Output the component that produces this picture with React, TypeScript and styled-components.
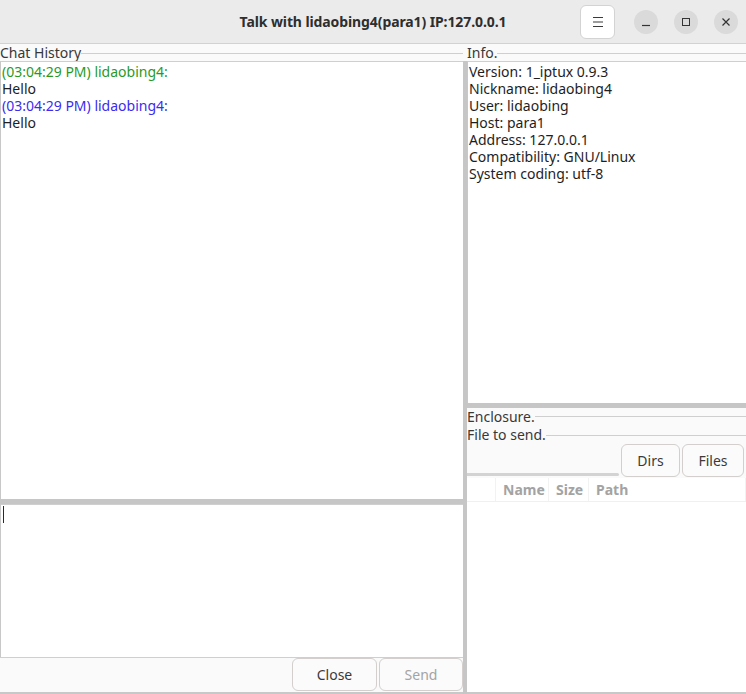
import React from "react";
import styled, { createGlobalStyle } from "styled-components";

const Global = createGlobalStyle`
  html, body { margin: 0; padding: 0; }
  body {
    width: 746px;
    height: 694px;
    overflow: hidden;
    background: #fafafa;
    font-family: "Noto Sans", "Open Sans", sans-serif;
    font-size: 14px;
    color: #2b2b2b;
  }
`;

const Window = styled.div`
  display: flex;
  flex-direction: column;
  width: 746px;
  height: 694px;
`;

const TitleBar = styled.header`
  position: relative;
  height: 43px;
  flex: none;
  display: flex;
  align-items: center;
  justify-content: flex-end;
  gap: 16px;
  padding-right: 8px;
  background: #ebebeb;
  border-bottom: 1px solid #d2d2d2;
`;

const Title = styled.h1`
  position: absolute;
  left: 0;
  right: 0;
  top: 0;
  bottom: 0;
  margin: 0;
  display: flex;
  align-items: center;
  justify-content: center;
  font-size: 14px;
  font-weight: 700;
  letter-spacing: -0.1px;
  color: #2e2e2e;
  pointer-events: none;
`;

const MenuButton = styled.button`
  width: 35px;
  height: 34px;
  margin-right: 3px;
  border: 1px solid #d3d3d3;
  border-radius: 6px;
  background: #ffffff;
  display: flex;
  align-items: center;
  justify-content: center;
  padding: 0;
  z-index: 1;
`;

const WinButtons = styled.div`
  display: flex;
  gap: 16px;
  z-index: 1;
`;

const CircleButton = styled.button`
  width: 24px;
  height: 24px;
  border-radius: 50%;
  border: none;
  background: #dadada;
  display: flex;
  align-items: center;
  justify-content: center;
  padding: 0;
`;

const Main = styled.div`
  flex: 1;
  display: flex;
  min-height: 0;
`;

const Column = styled.div<{ $width?: number }>`
  display: flex;
  flex-direction: column;
  ${(p) => (p.$width ? `width: ${p.$width}px; flex: none;` : "flex: 1; min-width: 0;")}
`;

const FrameLabel = styled.div<{ $height?: number }>`
  display: flex;
  align-items: center;
  height: ${(p) => p.$height ?? 17}px;
  flex: none;
  line-height: 17px;
  color: #383838;
  white-space: nowrap;
  &::after {
    content: "";
    flex: 1;
    height: 1px;
    margin-top: 1px;
    background: #cfcfcf;
  }
`;

const TextView = styled.div<{ $grow?: boolean; $height?: number }>`
  ${(p) => (p.$grow ? "flex: 1;" : `height: ${p.$height}px; flex: none;`)}
  min-height: 0;
  background: #ffffff;
  border-top: 1px solid #cfcfcf;
  border-left: 1px solid #c8c8c8;
  padding: 1px 0 0 1px;
  line-height: 17px;
  box-sizing: border-box;
  overflow: hidden;
`;

const Line = styled.div<{ $color?: string }>`
  color: ${(p) => p.$color ?? "#1e1e1e"};
  white-space: nowrap;
`;

const Cursor = styled.span`
  display: block;
  width: 1px;
  height: 17px;
  margin-left: 1px;
  background: #2a2a2a;
`;

const HandleH = styled.div`
  height: 5px;
  flex: none;
  background: #c6c6c6;
`;

const HandleV = styled.div`
  width: 4px;
  flex: none;
  margin-top: 17px;
  background: #c6c6c6;
`;

const ButtonBar = styled.div`
  height: 37px;
  flex: none;
  display: flex;
  justify-content: flex-end;
  align-items: flex-start;
  gap: 2px;
  border-top: 1px solid #cfcfcf;
  border-bottom: 2px solid #c8c8c8;
  box-sizing: border-box;
`;

const Button = styled.button<{ $width: number; $disabled?: boolean }>`
  width: ${(p) => p.$width}px;
  height: 33px;
  border: 1px solid #d2cfcc;
  border-radius: 6px;
  background: #fbfbfb;
  font-family: inherit;
  font-size: 14px;
  color: ${(p) => (p.$disabled ? "#a4a4a4" : "#3a3a3a")};
  padding: 0;
`;

const Spacer = styled.div`
  height: 2px;
  flex: none;
`;

const FileBar = styled.div`
  height: 35px;
  flex: none;
  display: flex;
  align-items: flex-end;
  gap: 2px;
  padding: 0 2px 1px 0;
  box-sizing: border-box;
`;

const Groove = styled.div`
  flex: 1;
  height: 3px;
  margin-bottom: 1px;
  border-radius: 0 2px 2px 0;
  background: #d3d3d3;
`;

const TreeView = styled.div`
  flex: 1;
  background: #ffffff;
  border-bottom: 2px solid #c8c8c8;
  display: flex;
  flex-direction: column;
`;

const TreeHeader = styled.div`
  height: 24px;
  display: flex;
  border-bottom: 1px solid #f0f0f0;
  box-sizing: border-box;
`;

const HeaderCell = styled.div<{ $width?: number }>`
  ${(p) => (p.$width ? `width: ${p.$width}px; flex: none;` : "flex: 1;")}
  display: flex;
  align-items: center;
  padding-left: 7px;
  box-sizing: border-box;
  border-right: 1px solid #f2f2f2;
  font-weight: 700;
  color: #a3a3a3;
`;

const Icon = styled.svg`
  display: block;
`;

export default function App() {
  return (
    <>
      <Global />
      <Window>
        <TitleBar>
          <Title>Talk with lidaobing4(para1) IP:127.0.0.1</Title>
          <MenuButton aria-label="Menu">
            <Icon width="12" height="12" viewBox="0 0 12 12">
              <path d="M1 1.5h10M1 6h10M1 10.5h10" stroke="#3a3a3a" strokeWidth="1" />
            </Icon>
          </MenuButton>
          <WinButtons>
            <CircleButton aria-label="Minimize">
              <Icon width="10" height="10" viewBox="0 0 10 10">
                <path d="M1 8.5h8" stroke="#333" strokeWidth="1.2" />
              </Icon>
            </CircleButton>
            <CircleButton aria-label="Maximize">
              <Icon width="10" height="10" viewBox="0 0 10 10">
                <rect x="1.5" y="1.5" width="7" height="7" fill="none" stroke="#333" strokeWidth="1" />
              </Icon>
            </CircleButton>
            <CircleButton aria-label="Close">
              <Icon width="10" height="10" viewBox="0 0 10 10">
                <path d="M1.5 1.5l7 7M8.5 1.5l-7 7" stroke="#333" strokeWidth="1.2" />
              </Icon>
            </CircleButton>
          </WinButtons>
        </TitleBar>
        <Main>
          <Column $width={463}>
            <FrameLabel>Chat History</FrameLabel>
            <TextView $grow>
              <Line $color="#2a9a1f">(03:04:29 PM) lidaobing4:</Line>
              <Line>Hello</Line>
              <Line $color="#3b2cf0">(03:04:29 PM) lidaobing4:</Line>
              <Line>Hello</Line>
            </TextView>
            <HandleH />
            <TextView $height={153}>
              <Cursor />
            </TextView>
            <ButtonBar>
              <Button $width={85}>Close</Button>
              <Button $width={84} $disabled>
                Send
              </Button>
            </ButtonBar>
          </Column>
          <HandleV />
          <Column>
            <FrameLabel>Info.</FrameLabel>
            <TextView $height={342}>
              <Line>Version: 1_iptux 0.9.3</Line>
              <Line>Nickname: lidaobing4</Line>
              <Line>User: lidaobing</Line>
              <Line>Host: para1</Line>
              <Line>Address: 127.0.0.1</Line>
              <Line>Compatibility: GNU/Linux</Line>
              <Line>System coding: utf-8</Line>
            </TextView>
            <HandleH />
            <FrameLabel $height={16}>Enclosure.</FrameLabel>
            <Spacer />
            <FrameLabel>File to send.</FrameLabel>
            <FileBar>
              <Groove />
              <Button $width={59}>Dirs</Button>
              <Button $width={62}>Files</Button>
            </FileBar>
            <TreeView>
              <TreeHeader>
                <HeaderCell $width={29} />
                <HeaderCell $width={53}>Name</HeaderCell>
                <HeaderCell $width={40}>Size</HeaderCell>
                <HeaderCell>Path</HeaderCell>
              </TreeHeader>
            </TreeView>
          </Column>
        </Main>
      </Window>
    </>
  );
}
